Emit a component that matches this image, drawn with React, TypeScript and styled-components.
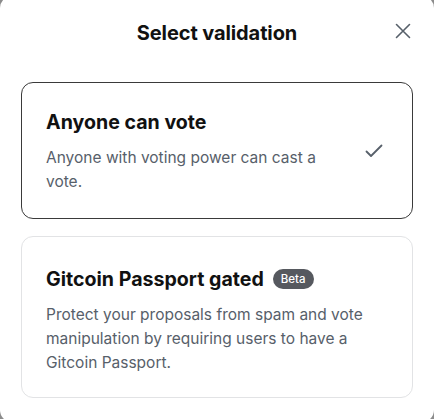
import React from "react";
import styled, { createGlobalStyle } from "styled-components";

const Global = createGlobalStyle`
  html, body {
    margin: 0;
    padding: 0;
    background: #8c8c8c;
    overflow: hidden;
  }
  body {
    font-family: Inter, "Noto Sans", sans-serif;
  }
`;

const Modal = styled.div`
  box-sizing: border-box;
  width: 434px;
  height: 426px;
  margin-top: -4px;
  background: #ffffff;
  border-radius: 12px;
  padding: 4px 21px 0;
  display: flex;
  flex-direction: column;
`;

const Header = styled.div`
  position: relative;
  display: flex;
  align-items: center;
  justify-content: center;
  height: 66px;
  padding-bottom: 16px;
`;

const Title = styled.h2`
  margin: 0;
  font-size: 20px;
  font-weight: 700;
  color: #111111;
  letter-spacing: -0.1px;
`;

const CloseButton = styled.button`
  position: absolute;
  right: 2px;
  top: 23px;
  width: 16px;
  height: 16px;
  padding: 0;
  border: none;
  background: none;
  display: flex;
  align-items: center;
  justify-content: center;
  cursor: pointer;
`;

const List = styled.div`
  display: flex;
  flex-direction: column;
  gap: 17px;
`;

const Card = styled.div<{ $selected?: boolean }>`
  box-sizing: border-box;
  border: 1px solid ${(p) => (p.$selected ? "#3a3a3a" : "#e2e3e5")};
  border-radius: 12px;
  padding: ${(p) => (p.$selected ? "24px 24px 24px" : "28px 24px 22px")};
  display: flex;
  align-items: center;
  gap: 16px;
  min-height: ${(p) => (p.$selected ? "137px" : "161px")};
`;

const CardBody = styled.div`
  flex: 1;
  display: flex;
  flex-direction: column;
  gap: 10px;
`;

const CardTitle = styled.div`
  display: flex;
  align-items: center;
  gap: 9px;
  font-size: 19.6px;
  font-weight: 700;
  color: #111111;
  line-height: 28px;
`;

const Badge = styled.span`
  display: inline-flex;
  align-items: center;
  height: 20px;
  padding: 0 8px;
  border-radius: 10px;
  background: #56595f;
  color: #ffffff;
  font-size: 11.5px;
  font-weight: 500;
`;

const Description = styled.p`
  margin: 0;
  font-size: 15.5px;
  line-height: 24px;
  color: #57606a;
`;

const Check = styled.div`
  width: 20px;
  display: flex;
  justify-content: center;
  margin-right: 4px;
`;

export default function App() {
  return (
    <>
      <Global />
      <Modal>
        <Header>
          <Title>Select validation</Title>
          <CloseButton aria-label="Close">
            <svg width="16" height="16" viewBox="0 0 16 16" fill="none">
              <path d="M1.5 1.5L14.5 14.5M14.5 1.5L1.5 14.5" stroke="#57606a" strokeWidth="1.6" strokeLinecap="round" />
            </svg>
          </CloseButton>
        </Header>
        <List>
          <Card $selected>
            <CardBody>
              <CardTitle>Anyone can vote</CardTitle>
              <Description>Anyone with voting power can cast a vote.</Description>
            </CardBody>
            <Check>
              <svg width="18" height="14" viewBox="0 0 18 14" fill="none">
                <path d="M1.5 7.5L6 12L16.5 1.5" stroke="#57606a" strokeWidth="1.8" strokeLinecap="round" strokeLinejoin="round" />
              </svg>
            </Check>
          </Card>
          <Card>
            <CardBody>
              <CardTitle>
                Gitcoin Passport gated <Badge>Beta</Badge>
              </CardTitle>
              <Description>
                Protect your proposals from spam and vote manipulation by requiring users to have a Gitcoin Passport.
              </Description>
            </CardBody>
          </Card>
        </List>
      </Modal>
    </>
  );
}
